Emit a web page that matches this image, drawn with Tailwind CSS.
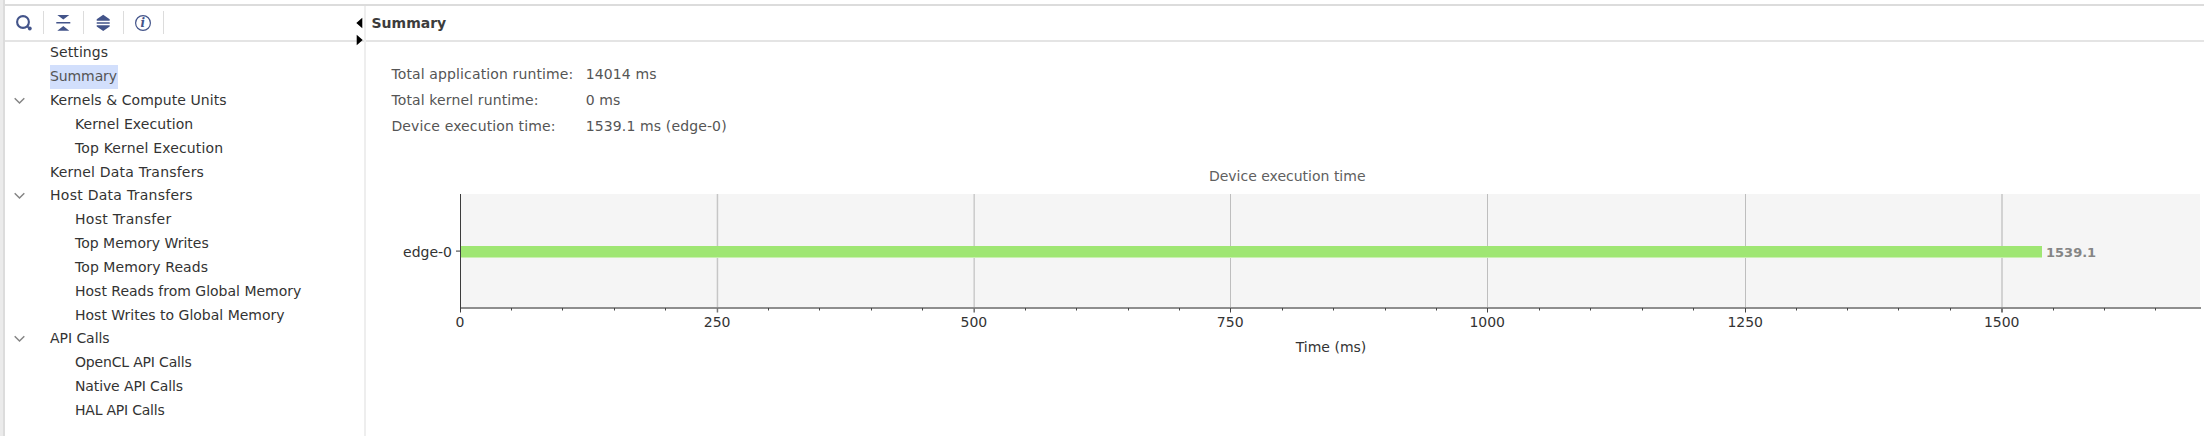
<!DOCTYPE html>
<html lang="en" class="h-[436px] overflow-hidden">
<head>
<meta charset="utf-8">
<title>Summary</title>
<script src="https://cdn.jsdelivr.net/npm/@tailwindcss/browser@4"></script>
</head>
<body class="relative flex h-[436px] w-[2204px] overflow-hidden bg-white font-['DejaVu_Sans',sans-serif] text-[14px] text-[#333]">
<div class="w-[5px] shrink-0 border-r-2 border-[#dcdcdc] bg-[#ebebeb]"></div>
<div class="flex min-w-0 flex-1 flex-col">
  <div class="h-[6px] shrink-0 border-b-2 border-[#dcdcdc]"></div>
  <div class="flex min-h-0 flex-1">
    <aside class="flex w-[361px] shrink-0 flex-col border-r-2 border-[#eeeeee]">
      <header class="flex h-[36px] shrink-0 items-center border-b-2 border-[#e4e4e4] pb-px text-[#43548a]">
        <div class="flex h-[23px] w-[39px] items-center justify-center border-r border-[#dcdcdc]">
          <svg width="18" height="18" viewBox="0 0 18 18" fill="none" stroke="currentColor"><circle cx="8" cy="8" r="5.9" stroke-width="2.1"/><path d="M12.2 12.2L13.6 13.6" stroke-width="2"/><circle cx="14.8" cy="14.5" r="1.9" fill="currentColor" stroke="none"/></svg>
        </div>
        <div class="flex h-[23px] w-[40px] items-center justify-center border-r border-[#dcdcdc] pr-px">
          <svg width="16" height="18" viewBox="0 0 16 18" fill="currentColor"><path d="M2.300 1h12L8.300 5.6zM1.300 8h14v1.600H1.300zM8.300 12l6 4.800h-12z"/></svg>
        </div>
        <div class="flex h-[23px] w-[40px] items-center justify-center border-r border-[#dcdcdc] pr-px">
          <svg width="16" height="18" viewBox="0 0 16 18" fill="currentColor"><path d="M8.200 .8L14.700 5.300V6.700H1.700V5.300zM1.700 8.200h13v1.500h-13zM1.700 11.200h13v1.300L8.200 17L1.700 12.500z"/></svg>
        </div>
        <div class="flex h-[23px] w-[40px] items-center justify-center border-r border-[#dcdcdc] pr-px">
          <svg width="18" height="18" viewBox="0 0 18 18"><circle cx="9" cy="9" r="7.4" fill="none" stroke="currentColor" stroke-width="1.2"/><text x="8.8" y="13.2" text-anchor="middle" font-family="DejaVu Serif" font-size="12" font-style="italic" font-weight="bold" fill="currentColor">i</text></svg>
        </div>
      </header>
      <nav id="tree" class="-mt-[0.6px] flex flex-col whitespace-nowrap"></nav>
    </aside>
    <main class="flex min-w-0 flex-1 flex-col">
      <header class="flex h-[36px] shrink-0 items-center border-b-2 border-[#e4e4e4] pl-[5.5px] text-[14px] font-bold text-[#3c3c3c]">Summary</header>
      <dl class="mt-[19px] ml-[25.4px] grid h-[79px] shrink-0 grid-cols-[194.3px_auto] content-start text-[#555] leading-[26px] tracking-[0.13px] whitespace-nowrap">
        <dt>Total application runtime:</dt><dd>14014 ms</dd>
        <dt>Total kernel runtime:</dt><dd>0 ms</dd>
        <dt>Device execution time:</dt><dd>1539.1 ms (edge-0)</dd>
      </dl>
      <svg id="chart" class="mt-[20px] shrink-0" width="1838" height="220" viewBox="366 160 1838 220" font-size="14" fill="#333">
        <text x="1287.2" y="181" text-anchor="middle" fill="#606060">Device execution time</text>
        <rect x="461" y="194" width="1739" height="113" fill="#f5f5f5"/>
        <g id="grid"></g>
        <rect x="461" y="246" width="1581" height="11" fill="#9fe673"/>
        <rect x="461" y="257" width="1581" height="1" fill="#c9f0b0"/>
        <rect x="460" y="307" width="1741" height="2" fill="#8e8e8e"/>
        <g id="ticks"></g>
        <rect x="460" y="194" width="1" height="118" fill="#3c3c3c"/>
        <rect x="456" y="250.500" width="4" height="1.200" fill="#555"/>
        <text x="452" y="257" text-anchor="end">edge-0</text>
        <text x="2046" y="257" font-size="13" font-weight="bold" fill="#858585">1539.1</text>
        <text x="1331" y="352" text-anchor="middle">Time (ms)</text>
      </svg>
    </main>
  </div>
</div>
<svg class="absolute top-[17px] left-[356px]" width="8" height="29" viewBox="0 0 8 29"><path d="M6.300 .7V11.200L.3 6zM.7 17.700V28.200L6.700 23z" fill="#000"/></svg>
<script>
// [depth, label, letter spacing in px, state]
const items = [[0,'Settings',.1],[0,'Summary',-.1,'sel'],[0,'Kernels & Compute Units',.06,'open'],[1,'Kernel Execution',.07],[1,'Top Kernel Execution',.15],[0,'Kernel Data Transfers',.2],[0,'Host Data Transfers',.27,'open'],[1,'Host Transfer',.3],[1,'Top Memory Writes',0],[1,'Top Memory Reads',.07],[1,'Host Reads from Global Memory',0],[1,'Host Writes to Global Memory',0],[0,'API Calls',-.05,'open'],[1,'OpenCL API Calls',-.18],[1,'Native API Calls',-.12],[1,'HAL API Calls',-.22]];
document.getElementById('tree').innerHTML = items.map(([d,t,ls,s]) => `<div class="flex h-[23.83px] items-start">
<div class="${d ? 'w-[70px]' : 'w-[45px]'} flex h-full shrink-0 items-center pl-[9px]">${s==='open' ? '<svg width="11" height="8" viewBox="0 0 11 8" fill="none" stroke="#858585" stroke-width="1.5"><path d="M.7 1.200L5.500 6L10.300 1.200"/></svg>' : ''}</div>
<span class="${s==='sel' ? 'h-full w-[68px] bg-[#d2dffc] leading-[23px] text-[#555]' : 'leading-[23px]'}" style="letter-spacing:${ls}px">${t.replace('&','&amp;')}</span></div>`).join('');
// major grid lines: tick index -> [x, width, colour]
const lines = {5:[716.7,1.5,'#c6c6c6'],10:[973.4,1.6,'#cdcdcd'],15:[1230,1,'#bebebe'],20:[1487,1,'#bebebe'],25:[1745,1,'#bebebe'],30:[2001,2,'#d2d2d2']};
let g = '', k = '';
for (let i = 0; i <= 33; i++) {
  const x = lines[i] ? lines[i][0] : Math.floor(460.2 + i * 51.385), major = i % 5 === 0;
  const w = lines[i] ? lines[i][1] : 1;
  if (lines[i]) g += `<rect x="${x}" y="194" width="${w}" height="113" fill="${lines[i][2]}"/>`;
  k += `<rect x="${x}" y="308" width="${w}" height="${major ? 4.5 : 2.5}" fill="${w > 1 ? '#777' : '#444'}"/>`;
  if (major) k += `<text x="${i ? x + w / 2 - .3 : 459.9}" y="326.500" text-anchor="middle">${i * 50}</text>`;
}
document.getElementById('grid').innerHTML = g;
document.getElementById('ticks').innerHTML = k;
</script>
</body>
</html>
